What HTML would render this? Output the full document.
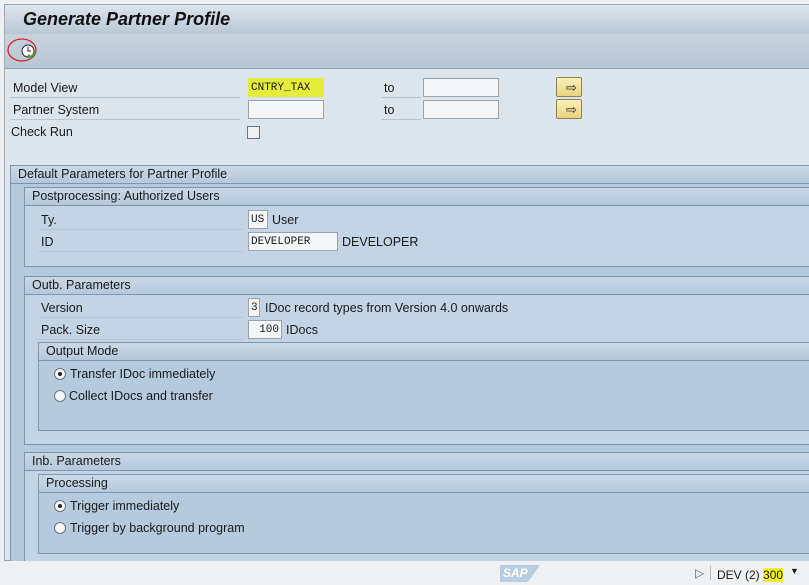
<!DOCTYPE html>
<html><head><style>
*{margin:0;padding:0;box-sizing:border-box}
body{width:809px;height:585px;overflow:hidden;background:#edf0f3;font-family:"Liberation Sans",sans-serif;font-size:12.5px;color:#1a1a1a;position:relative}
.a{position:absolute}
.frame{left:4px;top:4px;width:810px;height:557px;border:1px solid #9aaabb;background:#dde5ec}
.title{left:5px;top:5px;width:804px;height:29px;background:linear-gradient(#dde5ec,#b9c8d6);font:italic bold 18px "Liberation Sans",sans-serif;padding:4px 0 0 18px;color:#111}
.tb{left:5px;top:34px;width:804px;height:35px;background:linear-gradient(#c7d3de,#b7c6d4);border-bottom:1px solid #8fa2b5}
.lbl{height:20px;line-height:20px;border-bottom:1px solid #b9c4ce}
.inp{background:#f4f6f8;border:1px solid #9aa3ab;height:19px;font-family:"Liberation Mono",monospace;font-size:11px;line-height:18px;padding-left:2px}
.grp{border:1px solid #7f96ad;background:#b6cadd}
.gh{height:18px;line-height:17px;padding-left:7px;background:linear-gradient(#cbd9e6,#b5c8da);border-bottom:1px solid #7f96ad}
.rad{width:12px;height:12px;border-radius:50%;border:1px solid #6b7480;background:#f4f6f8}
.rad.on::after{content:"";position:absolute;left:3px;top:3px;width:4px;height:4px;border-radius:50%;background:#222}
.btn{width:26px;height:20px;border:1px solid #8c8256;border-radius:2px;background:linear-gradient(#fbf0b8,#e8d47e)}
</style></head><body>
<div class="a frame"></div>
<div class="a title">Generate Partner Profile</div>
<div class="a tb"></div>
<svg class="a" style="left:4px;top:36px" width="36" height="30"><ellipse cx="18" cy="14" rx="14" ry="11" fill="none" stroke="#d22" stroke-width="1.3"/><circle cx="24" cy="15" r="6" fill="#fff" stroke="#222"/><path d="M24 11v4h3" stroke="#222" fill="none"/><path d="M24 19l3 2 5-5" stroke="#3a3" stroke-width="2" fill="none"/></svg>

<div class="a lbl" style="left:10px;top:78px;width:230px;padding-left:3px">Model View</div>
<div class="a lbl" style="left:10px;top:100px;width:230px;padding-left:3px">Partner System</div>
<div class="a" style="left:11px;top:125px">Check Run</div>
<div class="a inp" style="left:248px;top:78px;width:76px;background:#e5ec3a;border-color:#e5ec3a">CNTRY_TAX</div>
<div class="a inp" style="left:248px;top:100px;width:76px"></div>
<div class="a" style="left:247px;top:126px;width:13px;height:13px;border:1px solid #6d747c;background:#eef1f4"></div>
<div class="a lbl" style="left:381px;top:78px;width:40px;padding-left:3px">to</div>
<div class="a lbl" style="left:381px;top:100px;width:40px;padding-left:3px">to</div>
<div class="a inp" style="left:423px;top:78px;width:76px"></div>
<div class="a inp" style="left:423px;top:100px;width:76px"></div>
<div class="a btn" style="left:556px;top:77px"></div>
<div class="a btn" style="left:556px;top:99px"></div>
<div class="a" style="left:566px;top:80px;color:#222;font-size:13px">⇨</div>
<div class="a" style="left:566px;top:102px;color:#222;font-size:13px">⇨</div>

<div class="a grp" style="left:10px;top:165px;width:810px;height:397px"><div class="gh">Default Parameters for Partner Profile</div></div>
<div class="a grp" style="left:24px;top:187px;width:800px;height:80px;background:#c3d4e4"><div class="gh">Postprocessing: Authorized Users</div></div>
<div class="a lbl" style="left:38px;top:210px;width:205px;padding-left:3px">Ty.</div>
<div class="a lbl" style="left:38px;top:232px;width:205px;padding-left:3px">ID</div>
<div class="a inp" style="left:248px;top:210px;width:20px">US</div>
<div class="a" style="left:272px;top:213px">User</div>
<div class="a inp" style="left:248px;top:232px;width:90px">DEVELOPER</div>
<div class="a" style="left:342px;top:235px">DEVELOPER</div>

<div class="a grp" style="left:24px;top:276px;width:800px;height:169px;background:#c3d4e4"><div class="gh">Outb. Parameters</div></div>
<div class="a lbl" style="left:38px;top:298px;width:205px;padding-left:3px">Version</div>
<div class="a lbl" style="left:38px;top:320px;width:205px;padding-left:3px">Pack. Size</div>
<div class="a inp" style="left:248px;top:298px;width:12px">3</div>
<div class="a" style="left:265px;top:301px">IDoc record types from Version 4.0 onwards</div>
<div class="a inp" style="left:248px;top:320px;width:34px;text-align:right;padding-right:2px">100</div>
<div class="a" style="left:286px;top:323px">IDocs</div>
<div class="a grp" style="left:38px;top:342px;width:790px;height:89px"><div class="gh">Output Mode</div></div>
<div class="a rad on" style="left:54px;top:368px"></div><div class="a" style="left:70px;top:367px">Transfer IDoc immediately</div>
<div class="a rad" style="left:54px;top:390px"></div><div class="a" style="left:69px;top:389px">Collect IDocs and transfer</div>

<div class="a grp" style="left:24px;top:452px;width:800px;height:115px;background:#c3d4e4"><div class="gh">Inb. Parameters</div></div>
<div class="a grp" style="left:38px;top:474px;width:790px;height:80px"><div class="gh">Processing</div></div>
<div class="a rad on" style="left:54px;top:500px"></div><div class="a" style="left:70px;top:499px">Trigger immediately</div>
<div class="a rad" style="left:54px;top:522px"></div><div class="a" style="left:70px;top:521px">Trigger by background program</div>

<div class="a" style="left:0;top:561px;width:809px;height:24px;background:#eef0f2"></div>
<div class="a" style="left:500px;top:565px;width:40px;height:17px;background:#b8cde0;clip-path:polygon(0 0,100% 0,70% 100%,0 100%);color:#fff;font:bold italic 12px 'Liberation Sans';padding:1px 0 0 3px">SAP</div>
<div class="a" style="left:695px;top:566px;color:#667;font-size:12px">▷</div>
<div class="a" style="left:710px;top:566px;width:1px;height:14px;background:#bbb"></div>
<div class="a" style="left:717px;top:568px;font-size:12px">DEV (2) <span style="background:#f3f21c">300 </span></div>
<div class="a" style="left:790px;top:566px;font-size:9px">▼</div>
</body></html>
